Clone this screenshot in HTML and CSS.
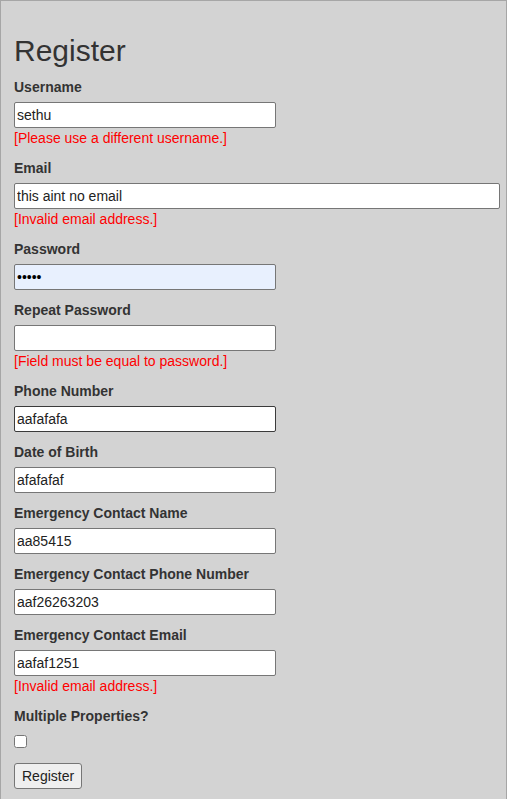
FILE: index.html
```
<!DOCTYPE html>
<html>
<head>
<meta charset="utf-8">
<link rel="stylesheet" href="styles.css">
</head>
<body>
<div class="panel">
  <h2 class="title">Register</h2>
  <div class="field">
    <label class="lbl">Username</label>
    <input class="txt" type="text" value="sethu">
    <div class="err">[Please use a different username.]</div>
  </div>
  <div class="field">
    <label class="lbl">Email</label>
    <input class="txt wide" type="text" value="this aint no email">
    <div class="err">[Invalid email address.]</div>
  </div>
  <div class="field">
    <label class="lbl">Password</label>
    <input class="txt autofill" type="password" value="aaaaa">
  </div>
  <div class="field">
    <label class="lbl">Repeat Password</label>
    <input class="txt" type="password" value="">
    <div class="err">[Field must be equal to password.]</div>
  </div>
  <div class="field">
    <label class="lbl">Phone Number</label>
    <input class="txt hover" type="text" value="aafafafa">
  </div>
  <div class="field">
    <label class="lbl">Date of Birth</label>
    <input class="txt" type="text" value="afafafaf">
  </div>
  <div class="field">
    <label class="lbl">Emergency Contact Name</label>
    <input class="txt" type="text" value="aa85415">
  </div>
  <div class="field">
    <label class="lbl">Emergency Contact Phone Number</label>
    <input class="txt" type="text" value="aaf26263203">
  </div>
  <div class="field">
    <label class="lbl">Emergency Contact Email</label>
    <input class="txt" type="text" value="aafaf1251">
    <div class="err">[Invalid email address.]</div>
  </div>
  <div class="field">
    <label class="lbl">Multiple Properties?</label>
    <input class="chk" type="checkbox">
  </div>
  <button class="btn" type="button">Register</button>
</div>
</body>
</html>
```
FILE: styles.css
```
html, body {
  margin: 0;
  padding: 0;
  background: #ffffff;
}
body {
  font-family: "Liberation Sans", Arial, sans-serif;
  font-size: 14px;
  line-height: 20px;
  color: #333333;
}
.panel {
  width: 507px;
  box-sizing: border-box;
  min-height: 830px;
  background: #d3d3d3;
  border: 1px solid #a6a6a6;
  padding: 13px 13px 20px 13px;
}
.title {
  margin: 20px 0 10px 0;
  font-size: 30px;
  line-height: 33px;
  font-weight: 500;
  color: #333333;
}
.field {
  margin-bottom: 10px;
}
.lbl {
  display: block;
  font-weight: bold;
  margin-bottom: 5px;
  line-height: 20px;
}
.txt {
  display: block;
  box-sizing: border-box;
  width: 262px;
  height: 26px;
  margin: 0;
  padding: 1px 2px;
  border: 1px solid #767676;
  border-radius: 2px;
  background: #ffffff;
  font-family: "Liberation Sans", Arial, sans-serif;
  font-size: 14px;
  color: #222222;
}
.wide {
  width: 486px;
}
.autofill {
  background: #e8f0fe;
  color: #000000;
}
.hover {
  border-color: #3b3b3b;
}
.err {
  color: #ff0000;
  line-height: 20px;
}
.chk {
  display: block;
  width: 13px;
  height: 13px;
  margin: 9px 0 15px 0;
}
.btn {
  display: block;
  box-sizing: border-box;
  height: 26px;
  margin: 0;
  padding: 1px 7px;
  border: 1px solid #767676;
  border-radius: 3px;
  background: #efefef;
  font-family: "Liberation Sans", Arial, sans-serif;
  font-size: 14px;
  color: #222222;
}
```
